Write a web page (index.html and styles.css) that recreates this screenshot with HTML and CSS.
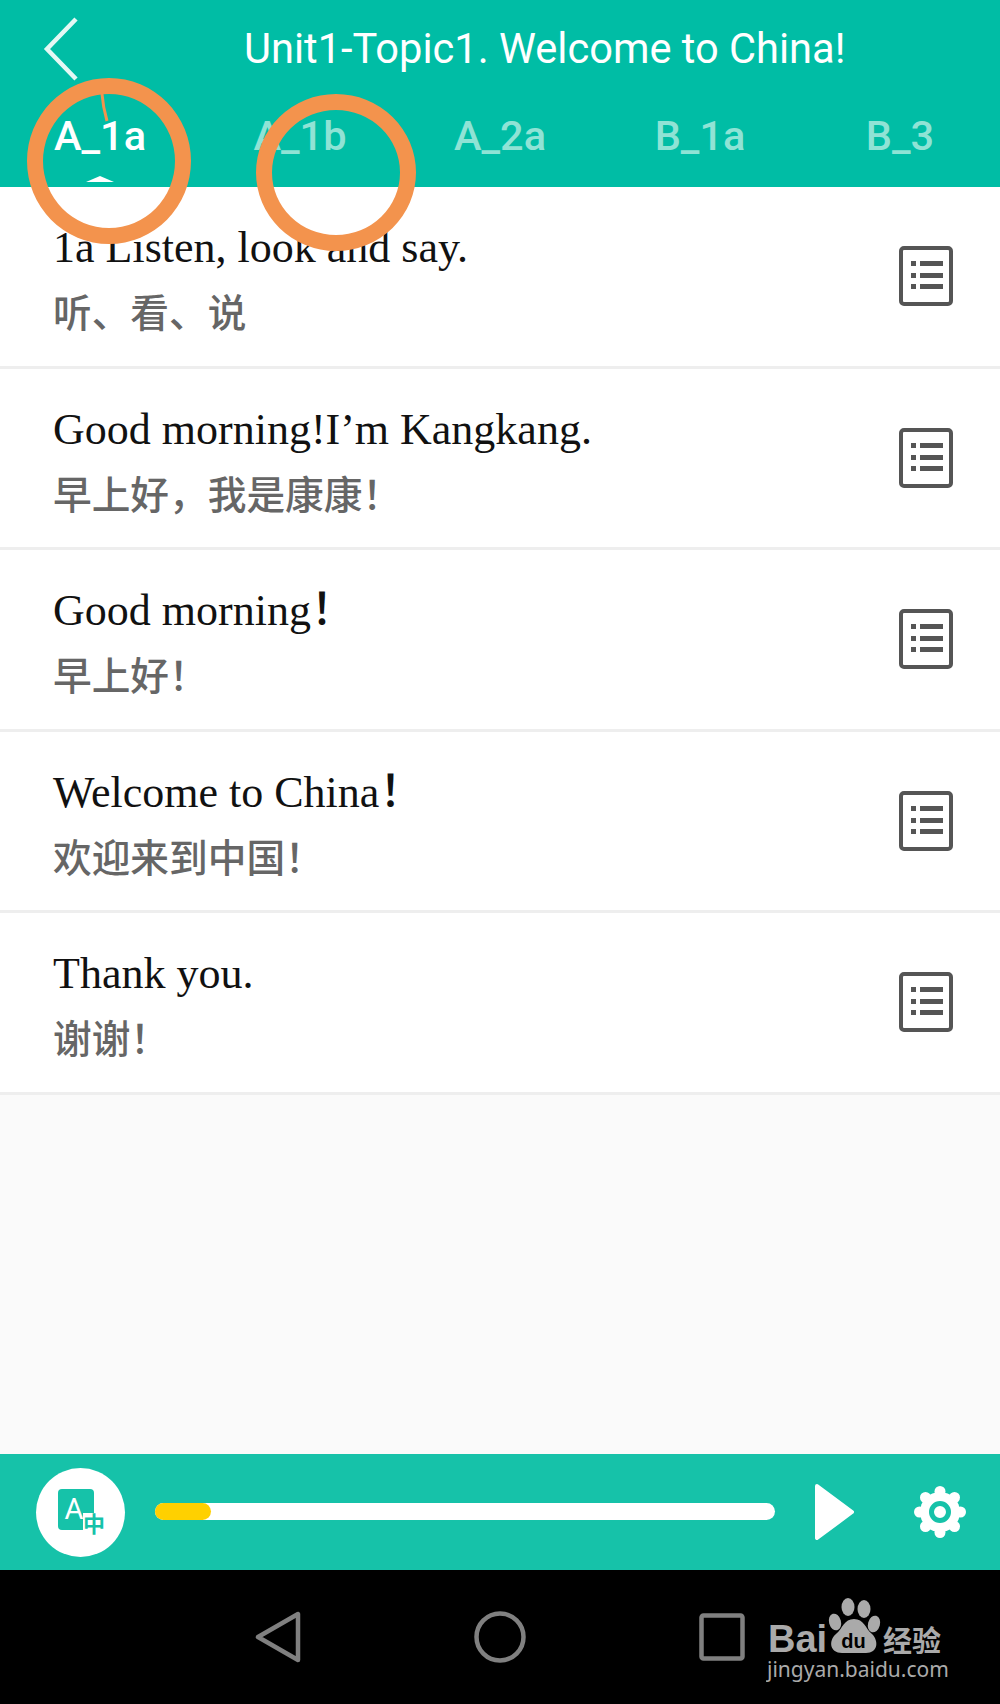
FILE: index.html

```html
<!DOCTYPE html>
<html lang="en">
<head>
  <meta charset="UTF-8" />
  <meta name="viewport" content="width=device-width, initial-scale=1" />
  <title>Unit1-Topic1. Welcome to China!</title>
  <link rel="stylesheet" href="styles.css">
</head>
<body>
  <div class="page">
    <header class="top">
      <div class="titlebar">
        <svg class="back" width="36" height="66" viewBox="0 0 36 66"><path d="M33 3 L4 33 L33 63" fill="none" stroke="#e4f8f4" stroke-width="4.5"/></svg>
        <div class="title">Unit1-Topic1. Welcome to China!</div>
      </div>
      <nav class="tabs">
        <div class="tab active">A_1a</div>
        <div class="tab">A_1b</div>
        <div class="tab">A_2a</div>
        <div class="tab">B_1a</div>
        <div class="tab">B_3</div>
      </nav>
    </header>

    <main class="list">
      <div class="row">
        <div class="texts">
          <div class="en">1a Listen, look and say.</div>
          <div class="zh">听、看、说</div>
        </div>
        <svg class="doc" width="56" height="60" viewBox="0 0 56 60"><use href="#doc-icon"/></svg>
      </div>
      <div class="row">
        <div class="texts">
          <div class="en">Good morning!I’m Kangkang.</div>
          <div class="zh">早上好，我是康康！</div>
        </div>
        <svg class="doc" width="56" height="60" viewBox="0 0 56 60"><use href="#doc-icon"/></svg>
      </div>
      <div class="row">
        <div class="texts">
          <div class="en">Good morning<span class="bang">！</span></div>
          <div class="zh">早上好！</div>
        </div>
        <svg class="doc" width="56" height="60" viewBox="0 0 56 60"><use href="#doc-icon"/></svg>
      </div>
      <div class="row">
        <div class="texts">
          <div class="en">Welcome to China<span class="bang">！</span></div>
          <div class="zh">欢迎来到中国！</div>
        </div>
        <svg class="doc" width="56" height="60" viewBox="0 0 56 60"><use href="#doc-icon"/></svg>
      </div>
      <div class="row">
        <div class="texts">
          <div class="en">Thank you.</div>
          <div class="zh">谢谢！</div>
        </div>
        <svg class="doc" width="56" height="60" viewBox="0 0 56 60"><use href="#doc-icon"/></svg>
      </div>
    </main>

    <div class="player">
      <div class="lang-btn">
        <svg width="60" height="60" viewBox="0 0 60 60">
          <rect x="7" y="7" width="36" height="41" rx="4" fill="#16c2a9"/>
          <rect x="32" y="31" width="28" height="29" fill="#fff"/>
          <text class="lang-a" x="23" y="37" text-anchor="middle">A</text>
          <text class="lang-zh" x="43" y="50" text-anchor="middle">中</text>
        </svg>
      </div>
      <div class="progress"><div class="progress-done"></div></div>
      <svg class="play" width="40" height="58" viewBox="0 0 40 58"><path d="M3 3 L38 29 L3 55 Z" fill="#fff" stroke="#fff" stroke-width="4" stroke-linejoin="round"/></svg>
      <svg class="gear" width="54" height="54" viewBox="0 0 54 54">
        <g fill="#fff">
          <circle cx="27" cy="27" r="20"/>
          <circle cx="27" cy="6.500" r="5.500"/>
          <circle cx="27" cy="47.500" r="5.500"/>
          <circle cx="6.500" cy="27" r="5.500"/>
          <circle cx="47.500" cy="27" r="5.500"/>
          <circle cx="12.500" cy="12.500" r="5.500"/>
          <circle cx="41.500" cy="12.500" r="5.500"/>
          <circle cx="12.500" cy="41.500" r="5.500"/>
          <circle cx="41.500" cy="41.500" r="5.500"/>
        </g>
        <circle cx="27" cy="27" r="8.500" fill="none" stroke="#16c2a9" stroke-width="5"/>
      </svg>
    </div>

    <footer class="navbar">
      <svg width="48" height="52" viewBox="0 0 48 52"><path d="M4 26 L44 3 V49 Z" fill="none" stroke="#808080" stroke-width="4.500" stroke-linejoin="round"/></svg>
      <svg width="52" height="52" viewBox="0 0 52 52"><circle cx="26" cy="26" r="23.500" fill="none" stroke="#808080" stroke-width="4.500"/></svg>
      <svg width="46" height="48" viewBox="0 0 46 48"><rect x="2.500" y="2.500" width="41" height="43" rx="2" fill="none" stroke="#808080" stroke-width="4.500"/></svg>
    </footer>

    <!-- orange marks drawn on the screenshot -->
    <div class="ring ring-a"></div>
    <div class="ring ring-b"></div>
    <svg class="ring-tail" width="12" height="30" viewBox="0 0 12 30"><path d="M2 1 Q3 14 7 28" fill="none" stroke="#f3934d" stroke-width="3"/></svg>

    <svg class="watermark" width="190" height="90" viewBox="0 0 190 90">
      <g fill="#aaa">
        <ellipse cx="82" cy="10" rx="6.500" ry="9"/>
        <ellipse cx="98" cy="12" rx="6.500" ry="9"/>
        <ellipse cx="69" cy="25" rx="6" ry="8.500" transform="rotate(-15 69 25)"/>
        <ellipse cx="108" cy="27" rx="6" ry="8.500" transform="rotate(15 108 27)"/>
        <path d="M88 22 C98 22 99 31 106 37 C113 44 112 56 100 56 C93 56 83 56 76 56 C64 56 62 44 70 37 C77 31 78 22 88 22 Z"/>
        <text class="wm-bai" x="2" y="55">Bai</text>
        <text class="wm-zh" x="117" y="55">经验</text>
        <text class="wm-url" x="1" y="80">jingyan.baidu.com</text>
      </g>
      <text class="wm-du" x="87.500" y="51" text-anchor="middle" fill="#000">du</text>
    </svg>
  </div>

  <svg width="0" height="0" class="defs">
    <defs>
      <g id="doc-icon">
        <rect x="3" y="2" width="50" height="56" rx="3" fill="none" stroke="#555" stroke-width="4"/>
        <g fill="#555">
          <rect x="13" y="15" width="5" height="5"/>
          <rect x="13" y="27" width="5" height="5"/>
          <rect x="13" y="38" width="5" height="5"/>
          <rect x="22" y="15" width="23" height="5"/>
          <rect x="22" y="27" width="23" height="5"/>
          <rect x="22" y="38" width="23" height="5"/>
        </g>
      </g>
    </defs>
  </svg>
</body>
</html>
```

FILE: styles.css

```css
* {
  box-sizing: border-box;
}
body {
  margin: 0;
  font-family: Roboto, "Noto Sans CJK SC", sans-serif;
}
.page {
  position: relative;
  width: 1000px;
  height: 1704px;
  display: flex;
  flex-direction: column;
  overflow: hidden;
  background: #fafafa;
}
.defs {
  position: absolute;
}

/* header */
.top {
  height: 187px;
  background: #00bda5;
  flex: none;
}
.titlebar {
  display: flex;
  align-items: center;
  height: 97px;
  padding-left: 43px;
}
.back {
  flex: none;
}
.title {
  margin-left: 165px;
  color: #fff;
  font-size: 41.600px;
  white-space: nowrap;
}
.tabs {
  display: grid;
  grid-template-columns: repeat(5, 200px);
  margin-top: 11px;
}
.tab {
  position: relative;
  text-align: center;
  color: #8fe3d5;
  font-size: 41.500px;
  font-weight: 500;
  line-height: 56px;
}
.tab.active {
  color: #fff;
}
.tab.active::after {
  content: "";
  position: absolute;
  left: 86px;
  top: 68px;
  width: 28px;
  height: 6px;
  background: #fff;
  clip-path: polygon(0 100%, 50% 0, 100% 100%);
}

/* list */
.list {
  flex: 1;
}
.row {
  display: flex;
  align-items: center;
  justify-content: space-between;
  height: 181.500px;
  padding: 0 46px 0 53px;
  background: #fff;
  border-bottom: 3px solid #eeeeee;
}
.texts {
  padding-top: 6px;
  white-space: nowrap;
}
.en {
  font-family: "Liberation Serif", serif;
  font-size: 44px;
  line-height: 50px;
  color: #111;
}
.bang {
  font-family: "Noto Sans CJK SC", sans-serif;
  font-weight: 500;
  line-height: 0;
}
.zh {
  margin-top: 12px;
  font-family: "Noto Sans CJK SC", sans-serif;
  font-size: 38.700px;
  font-weight: 500;
  line-height: 50px;
  color: #666;
}

/* player */
.player {
  flex: none;
  height: 116px;
  display: flex;
  align-items: center;
  padding-left: 36px;
  background: #16c2a9;
}
.lang-btn {
  width: 89px;
  height: 89px;
  display: flex;
  align-items: center;
  justify-content: center;
  border-radius: 50%;
  background: #fff;
}
.lang-a {
  font-family: Roboto, sans-serif;
  font-size: 29px;
  fill: #fff;
}
.lang-zh {
  font-family: "Noto Sans CJK SC", sans-serif;
  font-size: 22px;
  font-weight: 700;
  fill: #16c2a9;
}
.progress {
  width: 620px;
  height: 17px;
  margin-left: 30px;
  margin-bottom: 2px;
  border-radius: 9px;
  background: #fff;
}
.progress-done {
  width: 56px;
  height: 17px;
  border-radius: 9px;
  background: #ffd000;
}
.play {
  margin-left: 39px;
}
.gear {
  margin-left: 59px;
}

/* android nav */
.navbar {
  flex: none;
  height: 134px;
  display: grid;
  grid-template-columns: repeat(3, 222px);
  justify-content: center;
  justify-items: center;
  align-items: center;
  background: #000;
}

/* overlays */
.ring {
  position: absolute;
  border: 16px solid #f3934d;
  border-radius: 50%;
}
.ring-a {
  left: 27px;
  top: 78px;
  width: 164px;
  height: 166px;
}
.ring-b {
  left: 256px;
  top: 94px;
  width: 160px;
  height: 157px;
}
.ring-tail {
  position: absolute;
  left: 100px;
  top: 93px;
}
.watermark {
  position: absolute;
  left: 766px;
  top: 1597px;
}
.wm-bai {
  font-family: "Liberation Sans", sans-serif;
  font-size: 38px;
  font-weight: 700;
}
.wm-du {
  font-family: "Liberation Sans", sans-serif;
  font-size: 20px;
  font-weight: 700;
}
.wm-zh {
  font-family: "Noto Sans CJK SC", sans-serif;
  font-size: 29px;
  font-weight: 700;
}
.wm-url {
  font-family: "Noto Sans", sans-serif;
  font-size: 21px;
}
```
